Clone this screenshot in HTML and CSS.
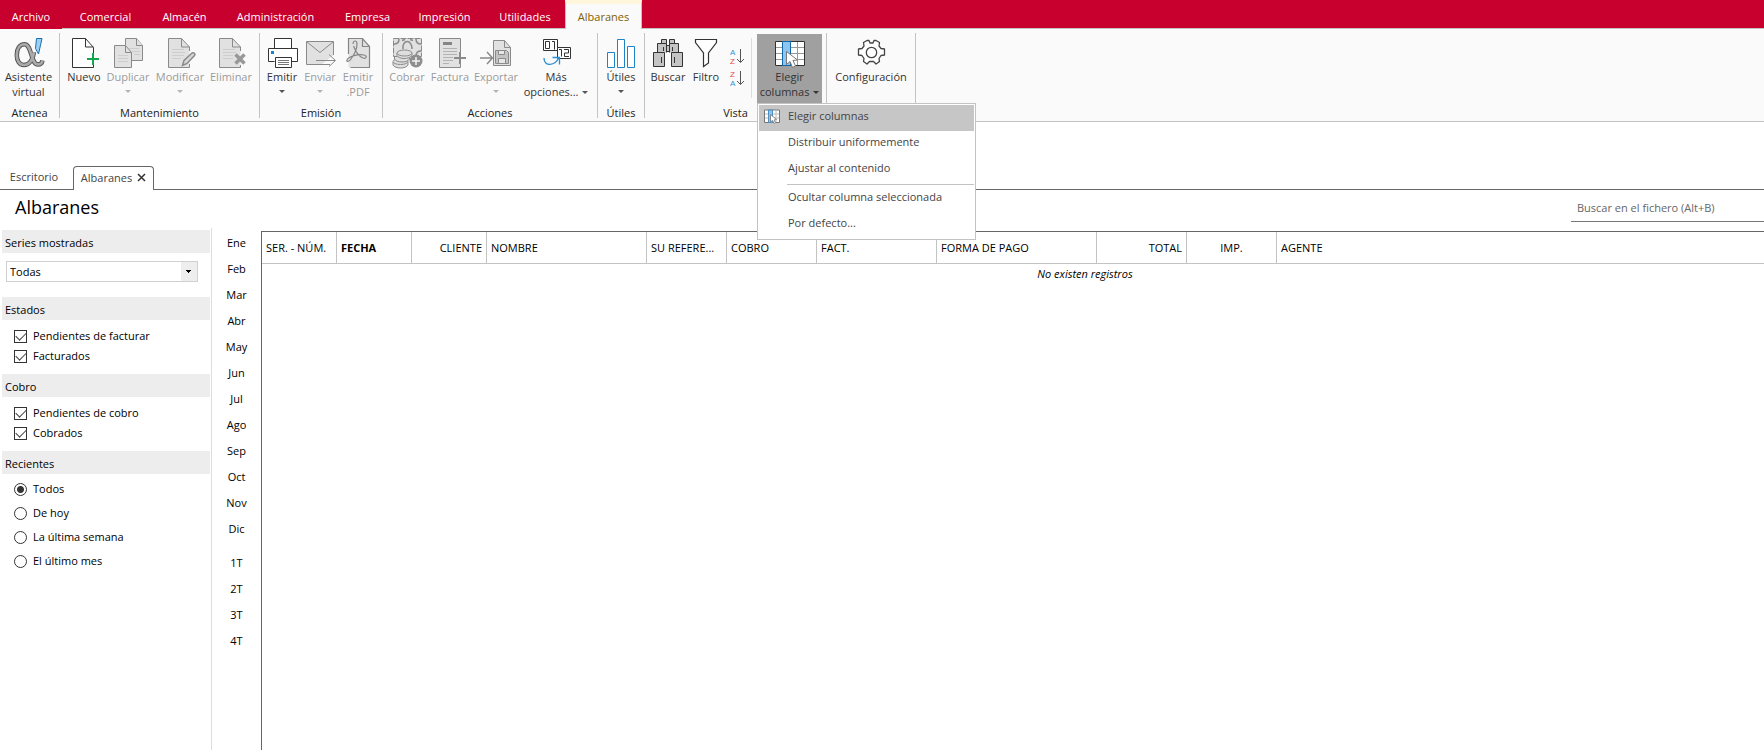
FILE: index.html
```html
<!DOCTYPE html>
<html lang="es">
<head>
<meta charset="utf-8">
<title>Albaranes</title>
<link rel="stylesheet" href="styles.css">
</head>
<body>
<nav class="tabs" aria-label="Menú principal">
  <button class="tab tab-first">Archivo</button>
  <button class="tab">Comercial</button>
  <button class="tab">Almacén</button>
  <button class="tab">Administración</button>
  <button class="tab">Empresa</button>
  <button class="tab">Impresión</button>
  <button class="tab">Utilidades</button>
  <button class="tab tab-active">Albaranes</button>
</nav>

<section class="ribbon">
  <div class="group">
    <div class="tools g-atenea">
      <button class="tool">
        <svg class="icon" viewBox="0 0 32 32"><g fill="none"><path d="M21 15C19.500 24 16 28 11 28C6 28 3.800 23.500 3.800 18C3.800 11.500 6.800 7.200 11.500 7.200C19 7.200 17.500 27.500 25 27.500C28 27.500 29 26 29.500 23.500" stroke="#555" stroke-width="4.500"/><path d="M21 15C19.500 24 16 28 11 28C6 28 3.800 23.500 3.800 18C3.800 11.500 6.800 7.200 11.500 7.200C19 7.200 17.500 27.500 25 27.500C28 27.500 29 26 29.500 23.500" stroke="#aaa" stroke-width="2.600"/></g><path d="M23.500 1.500h5.500L25.500 17l-3-5.500z" fill="#9bd0f5" stroke="#fafafa" stroke-width="3"/><path d="M23.500 1.500h5.500L25.500 17l-3-5.500z" fill="#9bd0f5" stroke="#1b6fae"/></svg>
        <span>Asistente</span><span>virtual</span>
      </button>
    </div>
    <h2 class="group-name">Atenea</h2>
  </div>

  <div class="group">
    <div class="tools g-mant">
      <button class="tool">
        <svg class="icon" viewBox="0 0 32 32"><path d="M25.500 16V10.500L17.500 1.500h-13v29h21" fill="#fff" stroke="none"/><path d="M25.500 16V10.500L17.500 1.500h-13v29h21V28M17.500 1.500v8.500h8" fill="none" stroke="#333"/><path d="M25 16v12M19 22h12" stroke="#13a64c" stroke-width="2"/></svg>
        <span>Nuevo</span>
      </button>
      <button class="tool" disabled>
        <svg class="icon" viewBox="0 0 32 32"><g fill="#e1e1e1" stroke="#8a8a8a"><path d="M13.500 8V1.500h11l6 7v15H20"/><path d="M24.500 1.500v7h6M2.500 8.500h11l6 7v15h-17z"/><path d="M13.500 8.500v7h6" fill="none"/></g><path d="M6 18.500h10M6 21.500h10M6 24.500h10M17 11.500h10M20 14.500h8M22 17.500h6" stroke="#cdcdcd"/></svg>
        <span>Duplicar</span><i class="caret"></i>
      </button>
      <button class="tool" disabled>
        <svg class="icon" viewBox="0 0 32 32"><path d="M25.500 14v-4L17.500 1.500h-13v29h21V27" fill="#e1e1e1" stroke="#8a8a8a"/><path d="M17.500 1.500v8.500h8" fill="none" stroke="#8a8a8a"/><path d="M8 12.500h12M8 15.500h13M8 18.500h12M8 21.500h9" stroke="#cdcdcd"/><path d="M18.500 28.500l1.500-5 8-7.500c2-1 3.500 1 2.500 2.500l-7.500 8z" fill="#d8d8d8" stroke="#8a8a8a" stroke-width="1.500"/></svg>
        <span>Modificar</span><i class="caret"></i>
      </button>
      <button class="tool" disabled>
        <svg class="icon" viewBox="0 0 32 32"><path d="M25.500 14v-4L17.500 1.500h-13v29h21V28" fill="#e1e1e1" stroke="#8a8a8a"/><path d="M17.500 1.500v8.500h8" fill="none" stroke="#8a8a8a"/><path d="M8 12.500h12M8 15.500h13M8 18.500h10M8 21.500h10" stroke="#cdcdcd"/><path d="M20.500 17.500l9 9M29.500 17.500l-9 9" stroke="#989898" stroke-width="3.500"/></svg>
        <span>Eliminar</span>
      </button>
    </div>
    <h2 class="group-name">Mantenimiento</h2>
  </div>

  <div class="group">
    <div class="tools g-emis">
      <button class="tool">
        <svg class="icon" viewBox="0 0 32 32"><g fill="#fff" stroke="#333"><path d="M8.500 11.500v-10h17v10M8.500 24.500h-6v-13h29v13h-6"/><path d="M9.500 20.500h16v10h-16z"/></g><path d="M12 23.500h11M12 25.500h11M12 27.500h11" stroke="#777"/><path fill="#1983cf" d="M5 14h3v3H5z"/></svg>
        <span>Emitir</span><i class="caret"></i>
      </button>
      <button class="tool" disabled>
        <svg class="icon" viewBox="0 0 32 32"><path d="M29.500 18V4.500h-27v23h15" fill="#e1e1e1" stroke="#8a8a8a"/><path d="M17 27.500h9M3 5l13 10.500L29 5M12 23.500h19M25 17.500l6.500 6-6.500 6" fill="none" stroke="#8a8a8a"/></svg>
        <span>Enviar</span><i class="caret"></i>
      </button>
      <button class="tool" disabled>
        <svg class="icon" viewBox="0 0 32 32"><path d="M6.500 24V1.500h14l7 8v21h-21" fill="#e1e1e1"/><path d="M6.500 17V1.500h14l7 8v21h-19M20.500 1.500v8h7M11 7c0-4 4-4 4 0 0 5-3 11-6 15-2 3-5 3-4 1 2-4 11-6 17-5 4 1 2 4-1 3-5-2-8-8-9.500-12" fill="none" stroke="#858585" stroke-width="1.200"/></svg>
        <span>Emitir</span><span>.PDF</span>
      </button>
    </div>
    <h2 class="group-name">Emisión</h2>
  </div>

  <div class="group">
    <div class="tools g-acc">
      <button class="tool" disabled>
        <svg class="icon" viewBox="0 0 32 32"><path d="M2.500 1.500h28v18h-28z" fill="#e1e1e1" stroke="#8a8a8a" stroke-dasharray="6 1"/><path d="M3 7c3 0 5-2 5-5M25 2c0 3 2 5 5 5M12 12C11 2 21 2 21 12M25 19c0-3 2-5 5-5M11 3.500l3-1M22 3.500l-3-1" fill="none" stroke="#8a8a8a" stroke-width="1.500"/><g fill="#dedede" stroke="#8a8a8a"><path d="M2 25v3c2 4 13 4 15 0v-3"/><ellipse cx="9.500" cy="24.500" rx="7.500" ry="3"/><path d="M3.500 20v2c2 4 13 4 15 0v-2"/><path d="M6 16.500v2c2 4 12 4 15 0v-2"/><ellipse cx="13.500" cy="16" rx="7.500" ry="3"/></g><circle cx="25" cy="24" r="6.500" fill="#8e8e8e"/><path d="M21 24h8M25 20v8" stroke="#f4f4f4" stroke-width="1.500"/></svg>
        <span>Cobrar</span>
      </button>
      <button class="tool" disabled>
        <svg class="icon" viewBox="0 0 32 32"><path d="M26.500 15V1.500h-21v29h21V27" fill="#e1e1e1" stroke="#8a8a8a"/><path d="M9 6.500h9" stroke="#858585" stroke-width="3"/><path d="M9 11.500h14M9 14.500h14M9 17.500h14M9 20.500h10M9 23.500h10M9 26.500h6" stroke="#b2b2b2"/><path d="M26 15v12M20 21h12" stroke="#8a8a8a" stroke-width="2"/></svg>
        <span>Factura</span>
      </button>
      <button class="tool" disabled>
        <svg class="icon" viewBox="0 0 32 32"><path d="M13.500 28.500V3.500h11l6 7v18z" fill="#e1e1e1" stroke="#8a8a8a"/><path d="M24.500 3.500v7h6" fill="none" stroke="#8a8a8a"/><path d="M15.500 13.500h11l2 2v11h-13z" fill="#c3c3c3" stroke="#8a8a8a"/><path d="M18.500 13.500h6v4h-6zM18.500 21.500h7v5h-7z" fill="#e6e6e6" stroke="#8a8a8a"/><path d="M0 21h12M7 15l5.500 6L7 27" fill="none" stroke="#8a8a8a" stroke-width="1.500"/></svg>
        <span>Exportar</span><i class="caret"></i>
      </button>
      <button class="tool">
        <svg class="icon" viewBox="0 0 32 32"><g fill="#fff" stroke="#333"><path d="M3.500 2.500h14v11h-14z"/><path d="M17.500 10.500h13v11h-13z"/></g><path d="M5.500 4.500h4v7h-4zM12 4.500h2.500v8M19 12.500h2.500v7M24 12.500h4.500v3.500h-4v3.500h4.500" fill="none" stroke="#333"/><path d="M4 21c0 9 11 8 15-.5M12.500 20.500h7v7" fill="none" stroke="#2b8fd6" stroke-width="1.300"/></svg>
        <span>Más</span><span>opciones... <i class="caret caret-inline"></i></span>
      </button>
    </div>
    <h2 class="group-name">Acciones</h2>
  </div>

  <div class="group">
    <div class="tools g-util">
      <button class="tool">
        <svg class="icon" viewBox="0 0 32 32"><path d="M2.500 15.500h7v15h-7zM12.500 2.500h7v28h-7zM22.500 9.500h7v21h-7z" fill="#fff" stroke="#1f83c7"/></svg>
        <span>Útiles</span><i class="caret"></i>
      </button>
    </div>
    <h2 class="group-name">Útiles</h2>
  </div>

  <div class="group">
    <div class="tools g-vista">
      <button class="tool">
        <svg class="icon" viewBox="0 0 32 32"><g fill="#c4c4c4" stroke="#333"><path d="M5.500 15.500v-9h9v9M17.500 15.500v-9h9v9M9.500 6.500v-4h5v4M17.500 6.500v-4h5v4M14.500 8.500h3v6h-3z"/><path d="M1.500 29.500v-14h11v14zM19.500 29.500v-14h11v14z"/><path d="M9.500 20v6M22.500 20v6M11.500 10v4M20.500 10v4"/></g></svg>
        <span>Buscar</span>
      </button>
      <button class="tool">
        <svg class="icon" viewBox="0 0 32 32"><path d="M5.500 2.500h21v3l-8 10.500v10l-5 3.500V16l-8-10.500z" fill="#fff" stroke="#333" stroke-width="1.200"/></svg>
        <span>Filtro</span>
      </button>
      <div class="sorts">
        <button class="sort" aria-label="Orden ascendente"><svg viewBox="0 0 18 19"><text class="glyph glyph-a" x="2" y="8">A</text><text class="glyph glyph-z" x="2" y="17">Z</text><path d="M12.500 2v13M9 12l3.500 3.500L16 12" fill="none" stroke="#555"/></svg></button>
        <button class="sort" aria-label="Orden descendente"><svg viewBox="0 0 18 19"><text class="glyph glyph-z" x="2" y="8">Z</text><text class="glyph glyph-a" x="2" y="17">A</text><path d="M12.500 2v13M9 12l3.500 3.500L16 12" fill="none" stroke="#555"/></svg></button>
      </div>
      <div class="dropdown">
        <button class="tool tool-open" aria-expanded="true">
          <svg class="icon" viewBox="0 0 32 32"><path d="M1.500 4.500h29v24h-29z" fill="#fff" stroke="#333"/><path d="M2 10.500h28M2 16.500h28M2 22.500h28M16.500 5v23M23.500 5v23" stroke="#999"/><path d="M8.500 4.500h8v24h-8z" fill="#8cc6f0" stroke="#1167ab"/><path d="M12.500 14.500v13l3.500-3 2.500 6 3-1.500-2.500-5.500 4.500-.5z" fill="#fff" stroke="#777"/></svg>
          <span>Elegir</span><span>columnas <i class="caret caret-inline"></i></span>
        </button>
        <div class="menu" role="menu">
          <button class="item item-on" role="menuitem"><svg class="item-icon" viewBox="0 0 32 32"><path d="M1 4h30v25H1z" fill="#fff" stroke="#777" stroke-width="2"/><path d="M2 12h28M2 20h28M16 5v23M24 5v23" stroke="#bbb" stroke-width="2"/><path d="M9 4h8v25H9z" fill="#8cc6f0" stroke="#4b8fc4" stroke-width="2"/><path d="M13 13v15l4-3 3 6 3-2-3-5 5-1z" fill="#fff" stroke="#888" stroke-width="2"/></svg>Elegir columnas</button>
          <button class="item" role="menuitem">Distribuir uniformemente</button>
          <button class="item" role="menuitem">Ajustar al contenido</button>
          <hr class="menu-line">
          <button class="item" role="menuitem">Ocultar columna seleccionada</button>
          <button class="item" role="menuitem">Por defecto...</button>
        </div>
      </div>
    </div>
    <h2 class="group-name">Vista</h2>
  </div>

  <div class="group">
    <div class="tools g-conf">
      <button class="tool">
        <svg class="icon" viewBox="0 0 32 32"><path d="M12 3.500h2l1 2.500h3l1-2.500h2l3.500 2-.5 3.500 2 2.500 3.500.500v6l-3.500.500-2 3 .5 3-3.500 2.500-2.500-2.500h-4l-2.500 2.500L8.500 24.500l.5-3-2-3-3.500-.5v-6l3.500-.5L9 9l-.5-3.500z" fill="#fff" stroke="#444" stroke-width="1.300" stroke-linejoin="round"/><circle cx="16.500" cy="15.500" r="5.200" fill="#fff" stroke="#444" stroke-width="1.300"/></svg>
        <span>Configuración</span>
      </button>
    </div>
  </div>
</section>

<nav class="docs" aria-label="Documentos">
  <button class="doc">Escritorio</button>
  <button class="doc doc-active">Albaranes <svg class="close" viewBox="0 0 9 9"><path d="M1 1l7 7M8 1L1 8" stroke="#333" stroke-width="1.500"/></svg></button>
</nav>

<header class="heading">
  <h1 class="title">Albaranes</h1>
  <input class="search" type="search" placeholder="Buscar en el fichero (Alt+B)" aria-label="Buscar en el fichero">
</header>

<main class="body">
  <aside class="side">
    <h2 class="side-head"><label for="series">Series mostradas</label></h2>
    <div class="combo">
      <select id="series" class="select"><option>Todas</option></select>
    </div>
    <h2 class="side-head">Estados</h2>
    <div class="checks">
      <label class="opt"><input class="check" type="checkbox" checked>Pendientes de facturar</label>
      <label class="opt"><input class="check" type="checkbox" checked>Facturados</label>
    </div>
    <h2 class="side-head">Cobro</h2>
    <div class="checks">
      <label class="opt"><input class="check" type="checkbox" checked>Pendientes de cobro</label>
      <label class="opt"><input class="check" type="checkbox" checked>Cobrados</label>
    </div>
    <h2 class="side-head">Recientes</h2>
    <div class="radios">
      <label class="opt"><input class="radio" type="radio" name="rec" checked>Todos</label>
      <label class="opt"><input class="radio" type="radio" name="rec">De hoy</label>
      <label class="opt"><input class="radio" type="radio" name="rec">La última semana</label>
      <label class="opt"><input class="radio" type="radio" name="rec">El último mes</label>
    </div>
  </aside>

  <div class="periods">
    <button class="period">Ene</button>
    <button class="period">Feb</button>
    <button class="period">Mar</button>
    <button class="period">Abr</button>
    <button class="period">May</button>
    <button class="period">Jun</button>
    <button class="period">Jul</button>
    <button class="period">Ago</button>
    <button class="period">Sep</button>
    <button class="period">Oct</button>
    <button class="period">Nov</button>
    <button class="period">Dic</button>
    <button class="period quarter-first">1T</button>
    <button class="period">2T</button>
    <button class="period">3T</button>
    <button class="period">4T</button>
  </div>

  <div class="grid">
    <table class="table">
      <colgroup><col class="w75"><col class="w75"><col class="w75"><col class="w160"><col class="w80"><col class="w90"><col class="w120"><col class="w160"><col class="w90"><col class="w90"><col></colgroup>
      <thead>
        <tr><th>SER. - NÚM.</th><th class="sorted">FECHA</th><th class="right">CLIENTE</th><th>NOMBRE</th><th>SU REFERE...</th><th>COBRO</th><th>FACT.</th><th>FORMA DE PAGO</th><th class="right">TOTAL</th><th class="center">IMP.</th><th>AGENTE</th></tr>
      </thead>
      <tbody>
        <tr><td class="empty" colspan="11">No existen registros</td></tr>
      </tbody>
    </table>
  </div>
</main>
</body>
</html>
```
FILE: styles.css
```css
* { box-sizing: border-box; }

body {
  margin: 0;
  min-height: 100vh;
  display: flex;
  flex-direction: column;
  background: #fff;
  color: #000;
  font: 11px/16px "Open Sans", "Noto Sans", sans-serif;
}

h1, h2 { margin: 0; font-weight: 400; }

button {
  margin: 0;
  padding: 0;
  border: 0;
  background: none;
  color: inherit;
  font: inherit;
}

/* Top menu */
.tabs {
  display: grid;
  grid-template-columns: 62px 87px 71px 111px 73px 81px 80px 77px;
  height: 29px;
  background: #c8002d;
  border-bottom: 1px solid #c3c3c3;
}
.tab { padding-top: 5px; color: #fff; }
.tab-first { height: 29px; background: #c8002d; }
.tab-active {
  height: 29px;
  padding-top: 1px;
  border: 1px solid #c3c3c3;
  border-top: 4px solid #fff6dc;
  border-bottom: 0;
  background: #fafafa;
  color: #806000;
}

/* Ribbon */
.ribbon {
  display: flex;
  height: 93px;
  padding-top: 4px;
  background: #fafafa;
  border-bottom: 1px solid #c3c3c3;
}
.group {
  display: flex;
  flex-direction: column;
  height: 85px;
  border-right: 1px solid #c3c3c3;
}
.group-name {
  flex: none;
  padding-top: 2px;
  font-size: 11px;
  line-height: 15px;
  text-align: center;
  color: #222;
}
.tools { display: grid; flex: none; height: 70px; padding-top: 1px; }
.g-atenea { grid-template-columns: 57px; width: 59px; }
.g-mant { grid-template-columns: 34px 54px 50px 52px; width: 199px; padding-left: 7px; }
.g-emis { grid-template-columns: 38px 38px 38px; width: 122px; padding-left: 3px; }
.g-acc { grid-template-columns: 42px 44px 48px 72px; width: 214px; padding-left: 3px; }
.g-util { grid-template-columns: 46px; width: 46px; }
.g-vista { grid-template-columns: 40px 36px 28px 5px 65px; width: 181px; padding-left: 3px; }
.g-conf { grid-template-columns: 88px; width: 88px; }

.tool {
  display: flex;
  flex-direction: column;
  align-items: center;
  padding-top: 3px;
  line-height: 15px;
  color: #333;
  white-space: nowrap;
}
.tool:disabled { color: #9a9a9a; }
.tool-open { width: 65px; height: 69px; background: #a0a0a0; }
.icon { flex: none; width: 32px; height: 32px; }
.caret {
  width: 0;
  height: 0;
  margin-top: 6px;
  border: 3px solid transparent;
  border-top-color: #555;
  border-bottom: 0;
}
.tool:disabled .caret { border-top-color: #b5b5b5; }
.tool-open .caret { border-top-color: #333; }
.caret-inline { display: inline-block; margin: 0 0 2px 1px; }

.sorts {
  display: flex;
  flex-direction: column;
  gap: 3px;
  height: 60px;
  margin-top: 4px;
  padding: 9px 0 0 4px;
  border-right: 1px solid #ddd;
}
.sort, .sort svg { display: block; width: 18px; height: 19px; }
.glyph { font: 8px "Liberation Sans", sans-serif; }
.glyph-a { fill: #2f95d6; }
.glyph-z { fill: #e5484e; }

.dropdown { position: relative; grid-column: 5; }
.menu {
  position: absolute;
  z-index: 2;
  top: 69px;
  left: 0;
  width: 219px;
  padding: 1px;
  border: 1px solid #c3c3c3;
  background: #fff;
}
.item {
  position: relative;
  display: block;
  width: 100%;
  padding: 2px 0 6px 29px;
  line-height: 18px;
  text-align: left;
  color: #444;
}
.item-on { background: #c6c6c6; }
.item-icon { position: absolute; left: 5px; top: 3px; width: 16px; height: 16px; }
.menu-line { margin: 1px 0 1px 28px; border: 0; border-top: 1px solid #c3c3c3; }

/* Document tabs */
.docs {
  display: flex;
  margin-top: 44px;
  height: 24px;
  border-bottom: 1px solid #666;
}
.doc { width: 73px; height: 23px; padding: 0 5px 2px 0; color: #444; }
.doc-active {
  display: flex;
  align-items: center;
  justify-content: center;
  gap: 5px;
  width: 81px;
  height: 24px;
  padding: 0 0 2px;
  border: 1px solid #666;
  border-bottom: 0;
  border-radius: 4px 4px 0 0;
  background: #fff;
}
.close { width: 9px; height: 9px; }

/* Heading */
.heading { display: flex; justify-content: space-between; height: 38px; }
.title { padding-left: 15px; font-size: 18px; line-height: 34px; }
.search {
  width: 193px;
  height: 32px;
  padding: 3px 6px 0;
  border: 0;
  border-bottom: 1px solid #777;
  outline: 0;
  background: none;
  font: inherit;
}
.search::placeholder { color: #666; opacity: 1; }

/* Work area */
.body { display: flex; flex: 1; }
.side { width: 212px; padding: 2px 1px 0 2px; border-right: 1px solid #ddd; }
.side-head { height: 23px; padding-left: 3px; background: #ededed; font-size: 11px; line-height: 25px; }
.combo { padding: 8px 12px 15px 4px; }
.select {
  display: block;
  appearance: none;
  width: 192px;
  height: 21px;
  padding: 0 3px;
  border: 1px solid #d0d0d0;
  border-radius: 0;
  background:
    linear-gradient(#000, #000) right 6px top 8px / 5px 1px no-repeat,
    linear-gradient(#000, #000) right 7px top 9px / 3px 1px no-repeat,
    linear-gradient(#000, #000) right 8px top 10px / 1px 1px no-repeat,
    linear-gradient(#eee, #eee) right / 16px 100% no-repeat,
    #fff;
  color: #000;
  font: inherit;
}
.opt { display: flex; align-items: center; gap: 6px; }
.checks { display: grid; grid-auto-rows: 20px; padding: 6px 0 8px 12px; }
.radios { display: grid; grid-auto-rows: 24px; padding: 3px 0 0 12px; }
.check, .radio {
  appearance: none;
  width: 13px;
  height: 13px;
  margin: 0;
  border: 1px solid #333;
  background: #fff;
}
.check { display: grid; place-items: center; }
.check:checked::before {
  content: "";
  width: 9px;
  height: 5px;
  margin-bottom: 3px;
  border: solid #444;
  border-width: 0 0 1px 1px;
  transform: rotate(-45deg);
}
.radio { border-radius: 50%; }
.radio:checked { background: radial-gradient(circle, #333 0 3px, #fff 4px); }

.periods { display: flex; flex-direction: column; width: 49px; padding-top: 2px; }
.period { height: 26px; }
.quarter-first { margin-top: 8px; }

/* Records */
.grid {
  flex: 1;
  min-width: 0;
  margin-top: 3px;
  border-top: 1px solid #666;
  border-left: 1px solid #666;
}
.table { width: 100%; table-layout: fixed; border-collapse: separate; border-spacing: 0; }
.w75 { width: 75px; }
.w80 { width: 80px; }
.w90 { width: 90px; }
.w120 { width: 120px; }
.w160 { width: 160px; }
.table th {
  height: 32px;
  padding: 0 4px;
  border-right: 1px solid #c3c3c3;
  border-bottom: 1px solid #c3c3c3;
  font-weight: 400;
  text-align: left;
  white-space: nowrap;
}
.table th:last-child { border-right: 0; }
.table .sorted { font-weight: 700; }
.table .right { text-align: right; }
.table .center { text-align: center; }
.empty { padding: 2px 0 0 144px; text-align: center; font-style: italic; }
```
